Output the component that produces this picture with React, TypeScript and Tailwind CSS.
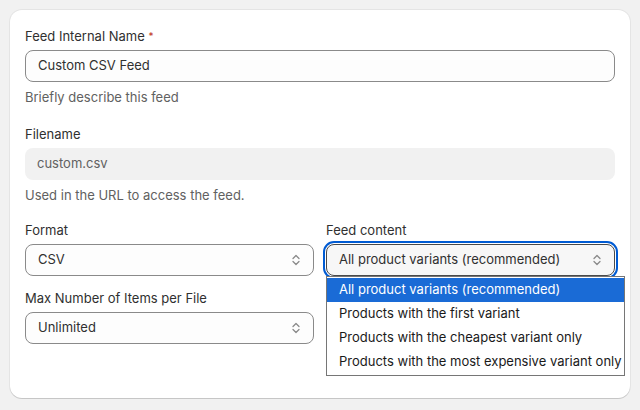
import React from "react";

const Chevrons = () => (
  <svg width="10" height="14" viewBox="0 0 10 14" fill="none" className="shrink-0">
    <path d="M2 5.5L5 2.5L8 5.5" stroke="#8a8a8a" strokeWidth="1.3" strokeLinecap="round" strokeLinejoin="round" />
    <path d="M2 8.5L5 11.5L8 8.5" stroke="#8a8a8a" strokeWidth="1.3" strokeLinecap="round" strokeLinejoin="round" />
  </svg>
);

const Label = ({ children }: { children: React.ReactNode }) => (
  <div className="text-[13px] leading-5 text-[#303030]">{children}</div>
);

const Help = ({ children }: { children: React.ReactNode }) => (
  <div className="text-[13px] leading-5 text-[#616161] mt-[5px]">{children}</div>
);

const Select = ({ value }: { value: string }) => (
  <div className="mt-1 h-8 rounded-lg border border-[#8a8a8a] bg-[#fdfdfd] flex items-center justify-between pl-3 pr-3 text-[13px] text-[#303030]">
    <span>{value}</span>
    <Chevrons />
  </div>
);

export default function App() {
  const options = [
    "All product variants (recommended)",
    "Products with the first variant",
    "Products with the cheapest variant only",
    "Products with the most expensive variant only",
  ];
  return (
    <div
      className="w-[640px] h-[410px] bg-[#f1f1f1] p-[10px]"
      style={{ fontFamily: "Inter, 'Noto Sans', sans-serif" }}
    >
      <div className="bg-white rounded-xl shadow-[0_1px_0_0_rgba(0,0,0,0.13),0_0_0_1px_rgba(0,0,0,0.05)] px-[15px] pt-4 pb-[54px]">
        <Label>
          Feed Internal Name{" "}
          <span className="text-[#c0341d] text-[10px] align-top">*</span>
        </Label>
        <div className="mt-1 h-8 rounded-lg border border-[#8a8a8a] bg-[#fdfdfd] flex items-center px-3 text-[13px] text-[#303030]">
          Custom CSV Feed
        </div>
        <Help>Briefly describe this feed</Help>

        <div className="mt-[17px]">
          <Label>Filename</Label>
          <div className="mt-1 h-8 rounded-lg bg-[#f1f1f1] flex items-center px-3 text-[13px] text-[#616161]">
            custom.csv
          </div>
          <Help>Used in the URL to access the feed.</Help>
        </div>

        <div className="mt-[15px] grid grid-cols-2 gap-x-3">
          <div>
            <Label>Format</Label>
            <Select value="CSV" />
            <div className="mt-3">
              <Label>Max Number of Items per File</Label>
              <Select value="Unlimited" />
            </div>
          </div>
          <div>
            <Label>Feed content</Label>
            <div className="relative mt-1">
              <div className="h-8 rounded-lg border border-[#4a4a4a] bg-[#f7f7f7] outline-2 outline-[#005bd3] outline-offset-1 flex items-center justify-between px-3 text-[13px] text-[#303030]">
                <span>All product variants (recommended)</span>
                <Chevrons />
              </div>
              <div className="absolute left-0 top-full w-[299px] border border-[#767676] bg-white py-px z-10">
                {options.map((o, i) => (
                  <div
                    key={o}
                    className={
                      i === 0
                        ? "h-6 flex items-center pl-3 whitespace-nowrap text-[13px] bg-[#1a6bd6] text-white"
                        : "h-6 flex items-center pl-3 whitespace-nowrap text-[13px] text-[#1a1a1a]"
                    }
                  >
                    {o}
                  </div>
                ))}
              </div>
            </div>
          </div>
        </div>
      </div>
    </div>
  );
}
